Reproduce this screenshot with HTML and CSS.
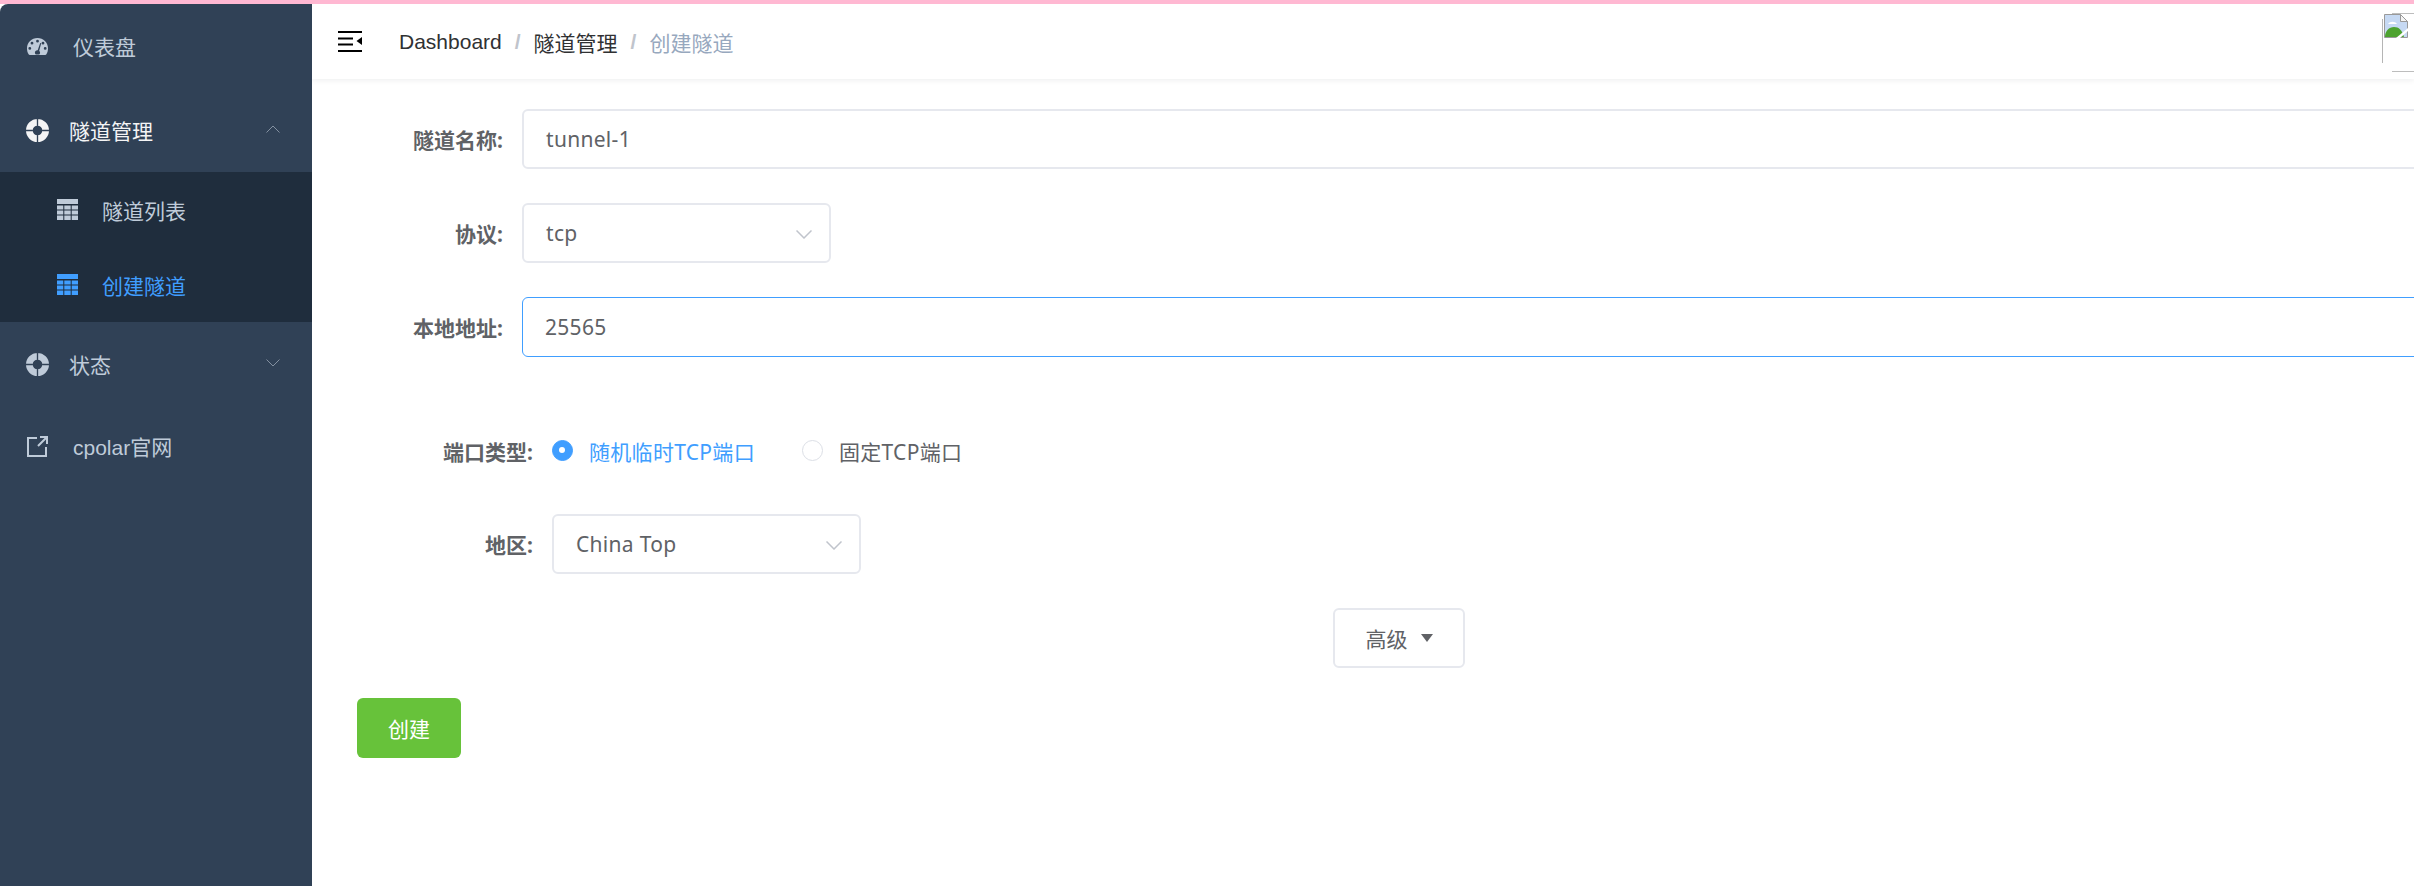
FILE: index.html
```html
<!DOCTYPE html>
<html lang="zh-CN">
<head>
<meta charset="utf-8">
<title>创建隧道</title>
<link rel="stylesheet" href="styles.css">
</head>
<body>
<div class="app">
  <aside class="sidebar">
    <a class="menu-item">
      <svg class="icon icon-gauge" viewBox="0 0 21 17"><path class="fill" fill-rule="evenodd" d="M10.500 0C4.700 0 0 4.600 0 10.400c0 2.200.6 4.300 1.600 5.900.3.500.7.700 1.200.7h15.400c.5 0 .9-.2 1.200-.7 1-1.600 1.600-3.700 1.600-5.900C21 4.600 16.300 0 10.500 0zM10.500 1.800a1.400 1.400 0 1 1 0 2.800 1.400 1.400 0 0 1 0-2.800zM5 3.800a1.400 1.400 0 1 1 0 2.800 1.400 1.400 0 0 1 0-2.800zM2.800 9a1.400 1.400 0 1 1 0 2.800 1.400 1.400 0 0 1 0-2.800zM18.200 9a1.400 1.400 0 1 1 0 2.800 1.400 1.400 0 0 1 0-2.800zM16 3.800a1.400 1.400 0 1 1 0 2.800 1.400 1.400 0 0 1 0-2.800zM13.200 5l1 .3-2 7.500c.6.500.9 1.200.9 1.900 0 .9-.4 1.500-.9 1.800H8.800c-.5-.3-.9-.9-.9-1.800 0-1.500 1.200-2.600 2.800-2.400z"/></svg>
      <span class="label label-wide">仪表盘</span>
    </a>
    <a class="menu-item menu-open">
      <svg class="icon icon-ring" viewBox="0 0 24 24"><path class="fill" fill-rule="evenodd" d="M12 0a12 12 0 1 1 0 24 12 12 0 0 1 0-24zM12 7a5 5 0 1 0 0 10 5 5 0 0 0 0-10zM11.300 0v7.100h1.400V0zM11.300 16.900V24h1.400v-7.100zM0 11.300v1.400h7.100v-1.400zM16.900 11.300v1.400H24v-1.400z"/></svg>
      <span class="label">隧道管理</span>
      <svg class="chevron" viewBox="0 0 14 8"><path d="M.5 7.500 7 1l6.500 6.500"/></svg>
    </a>
    <div class="submenu">
      <a class="sub-item">
        <svg class="icon" viewBox="0 0 21 21"><path class="fill" d="M0 0h21v5H0zM0 6.500h6.300v4H0zM7.300 6.500h6.400v4H7.300zM14.700 6.500H21v4h-6.300zM0 11.500h6.300v4H0zM7.300 11.500h6.400v4H7.300zM14.700 11.500H21v4h-6.300zM0 16.500h6.300V21H0zM7.300 16.500h6.400V21H7.300zM14.700 16.500H21V21h-6.300z"/></svg>
        <span class="label">隧道列表</span>
      </a>
      <a class="sub-item is-active">
        <svg class="icon" viewBox="0 0 21 21"><path class="fill" d="M0 0h21v5H0zM0 6.500h6.300v4H0zM7.300 6.500h6.400v4H7.300zM14.700 6.500H21v4h-6.300zM0 11.500h6.300v4H0zM7.300 11.500h6.400v4H7.300zM14.700 11.500H21v4h-6.300zM0 16.500h6.300V21H0zM7.300 16.500h6.400V21H7.300zM14.700 16.500H21V21h-6.300z"/></svg>
        <span class="label">创建隧道</span>
      </a>
    </div>
    <a class="menu-item menu-status">
      <svg class="icon icon-ring" viewBox="0 0 24 24"><path class="fill" fill-rule="evenodd" d="M12 0a12 12 0 1 1 0 24 12 12 0 0 1 0-24zM12 7a5 5 0 1 0 0 10 5 5 0 0 0 0-10zM11.300 0v7.100h1.400V0zM11.300 16.900V24h1.400v-7.100zM0 11.300v1.400h7.100v-1.400zM16.900 11.300v1.400H24v-1.400z"/></svg>
      <span class="label">状态</span>
      <svg class="chevron" viewBox="0 0 14 8"><path d="M.5.500 7 7 13.500.5"/></svg>
    </a>
    <a class="menu-item menu-link">
      <svg class="icon icon-link" viewBox="0 0 21 21"><path d="M10 2H1v18h18v-9M11 10 20 1M13 1h7v7"/></svg>
      <span class="label label-wide">cpolar官网</span>
    </a>
  </aside>
  <div class="main">
    <header class="navbar">
      <svg class="hamburger" viewBox="0 0 24 21"><path d="M0 0h24v2H0zM0 6.500h15v2H0zM0 12.500h15v2H0zM0 19h24v2H0z"/><path d="M24 6v8l-5.500-4z"/></svg>
      <nav class="crumbs">
        <span class="crumb-link">Dashboard</span>
        <span class="crumb-sep">/</span>
        <span class="crumb-link">隧道管理</span>
        <span class="crumb-sep">/</span>
        <span class="crumb-current">创建隧道</span>
      </nav>
      <div class="avatar">
        <svg class="broken" viewBox="0 0 24 24">
          <path d="M.5.500h16l7 7v16H.500z" fill="#c6d9f3" stroke="#9a9a9a"/>
          <path d="M16.500.500v7h7z" fill="#f4f4f4" stroke="#9a9a9a"/>
          <path d="M4 10c2-3 7-3 9 0z" fill="#fff"/>
          <path d="M1 23c0-6 4-10 9-10s8 3 10 10z" fill="#4da32f"/>
          <path d="M12 24 24 14v3l-8 7z" fill="#fff"/>
        </svg>
      </div>
    </header>
    <form class="form">
      <div class="group">
        <div class="row">
          <label class="field-label">隧道名称:</label>
          <div class="input">tunnel-1</div>
        </div>
        <div class="row">
          <label class="field-label">协议:</label>
          <div class="input select">tcp
            <svg class="caret" viewBox="0 0 16 9"><path d="M.5.500 8 8 15.500.5"/></svg>
          </div>
        </div>
        <div class="row">
          <label class="field-label">本地地址:</label>
          <div class="input is-focus">25565</div>
        </div>
      </div>
      <div class="group group-inner">
        <div class="row row-radio">
          <label class="field-label">端口类型:</label>
          <div class="radios">
            <span class="radio is-checked"><i class="dot"></i>随机临时TCP端口</span>
            <span class="radio"><i class="dot"></i>固定TCP端口</span>
          </div>
        </div>
        <div class="row">
          <label class="field-label">地区:</label>
          <div class="input select">China Top
            <svg class="caret" viewBox="0 0 16 9"><path d="M.5.500 8 8 15.500.5"/></svg>
          </div>
        </div>
      </div>
      <div class="advanced-row">
        <button type="button" class="btn btn-advanced">高级<i class="tri"></i></button>
      </div>
      <button type="button" class="btn btn-create">创建</button>
    </form>
  </div>
</div>
</body>
</html>
```
FILE: styles.css
```css
* { box-sizing: border-box; }
html, body { margin: 0; height: 100%; overflow: hidden; }
body {
  background: #fff;
  border-top: 4px solid #ffb8d2;
  font-family: "Noto Sans", "Noto Sans CJK SC", sans-serif;
  font-size: 21px;
  color: #606266;
}
.app { display: flex; height: 882px; }

.sidebar {
  width: 312px;
  flex: none;
  background: #304156;
  border-top-left-radius: 8px;
  color: #bfcbd9;
  font-family: "Liberation Sans", "Noto Sans CJK SC", sans-serif;
}
.menu-item { display: flex; align-items: center; height: 84px; padding-left: 27px; position: relative; }
.menu-item .label { margin-left: 20px; }
.menu-item .label.label-wide { margin-left: 25px; }
.menu-open { color: #f4f4f5; }
.menu-status { height: 84px; }
.menu-link { height: 80px; }
.icon { width: 21px; height: 21px; flex: none; }
.icon-gauge { height: 17px; }
.icon-ring { width: 23px; height: 23px; margin-left: -1px; }
.fill { fill: currentColor; }
.icon-link { fill: none; stroke: currentColor; stroke-width: 2; }
.chevron {
  position: absolute;
  right: 32px;
  top: 37px;
  width: 14px;
  height: 8px;
  fill: none;
  stroke: #8491a1;
  stroke-width: 1;
}
.submenu { background: #1f2d3d; height: 150px; }
.sub-item { display: flex; align-items: center; height: 75px; padding-left: 57px; }
.sub-item .label { margin-left: 24px; }
.sub-item.is-active { color: #409eff; }

.main { flex: 1; min-width: 0; overflow: hidden; }
.navbar {
  position: relative;
  display: flex;
  align-items: center;
  height: 75px;
  padding-left: 26px;
  box-shadow: 0 1px 6px rgba(0, 21, 41, .08);
}
.hamburger { width: 24px; height: 21px; flex: none; }
.crumbs {
  margin-left: 37px;
  font-family: "Liberation Sans", "Noto Sans CJK SC", sans-serif;
  display: flex;
  align-items: center;
}
.crumb-link { color: #303133; }
.crumb-sep { color: #c0c4cc; margin: 0 13px; font-weight: 700; }
.crumb-current { color: #97a8be; }
.avatar {
  position: absolute;
  right: -20px;
  top: 9px;
  width: 52px;
  height: 59px;
}
.avatar::before {
  content: "";
  position: absolute;
  left: 0;
  top: 6px;
  bottom: 9px;
  width: 1px;
  background: #b5b5b5;
}
.avatar::after {
  content: "";
  position: absolute;
  left: 10px;
  right: 0;
  top: 0;
  bottom: 0;
  border-top: 1px solid #bdbdbd;
  border-bottom: 1px solid #bdbdbd;
}
.broken { position: absolute; left: 2px; top: 1px; width: 24px; height: 24px; z-index: 1; }

.form { padding: 30px 0 0 45px; }
.group { display: flex; flex-direction: column; gap: 34px; }
.row { display: flex; align-items: center; height: 60px; }
.field-label {
  flex: none;
  width: 165px;
  padding-right: 19px;
  text-align: right;
  font-weight: 700;
  color: #606266;
}
.input {
  flex: 1;
  min-width: 0;
  height: 60px;
  margin-right: -40px;
  display: flex;
  align-items: center;
  padding-left: 22px;
  border: 2px solid #e6e8ee;
  border-radius: 6px;
  position: relative;
  line-height: 1;
  letter-spacing: .3px;
}
.input.is-focus { border-color: #409eff; border-width: 1.500px; }
.select { flex: none; width: 309px; margin-right: 0; }
.caret {
  position: absolute;
  right: 17px;
  top: 25px;
  width: 16px;
  height: 9px;
  fill: none;
  stroke: #c0c4cc;
  stroke-width: 1.500;
}

.group-inner { margin-top: 63px; gap: 33px; }
.group-inner .field-label { width: 195px; }
.row-radio { height: 61px; }
.radios { display: flex; align-items: center; gap: 47px; letter-spacing: .3px; }
.radio { display: inline-flex; align-items: center; }
.dot {
  width: 21px;
  height: 21px;
  margin-right: 16px;
  border: 1.500px solid #dcdfe6;
  border-radius: 50%;
  background: #fff;
  flex: none;
  position: relative;
}
.radio.is-checked { color: #409eff; }
.radio.is-checked .dot { border-color: #409eff; background: #409eff; }
.radio.is-checked .dot::after {
  content: "";
  position: absolute;
  left: 6px;
  top: 6px;
  width: 6px;
  height: 6px;
  border-radius: 50%;
  background: #fff;
}

.btn {
  font: inherit;
  height: 60px;
  border-radius: 6px;
  padding: 0;
  display: inline-flex;
  align-items: center;
  justify-content: center;
}
.advanced-row { display: flex; margin-top: 34px; padding-left: 976px; }
.btn-advanced { width: 132px; background: #fff; border: 2px solid #e6e8ee; color: #606266; }
.tri {
  margin-left: 13px;
  border-left: 6.500px solid transparent;
  border-right: 6.500px solid transparent;
  border-top: 8px solid #606266;
}
.btn-create {
  margin-top: 30px;
  width: 104px;
  background: #67c23a;
  border: 0;
  color: #fff;
}
```
